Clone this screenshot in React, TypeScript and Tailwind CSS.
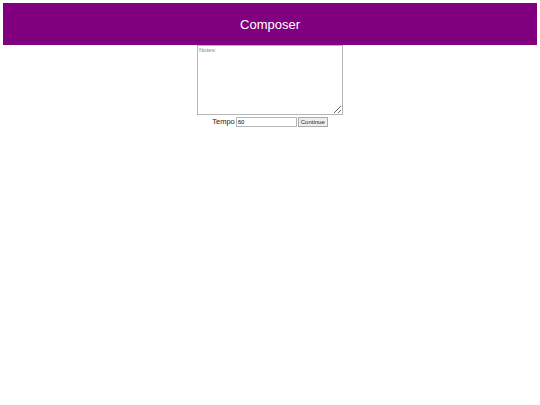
export default function App() {
  return (
    <div className="min-h-[405px] bg-white p-[3px] font-['Liberation_Sans',Arial,sans-serif]">
      {/* Header */}
      <header className="flex h-[42px] items-center justify-center bg-[#800080] pt-[2px]">
        <h1 className="text-[13px] font-normal text-white">Composer</h1>
      </header>

      {/* Form */}
      <div className="flex flex-col items-center">
        <textarea
          placeholder="Notes:"
          className="block h-[70px] w-[146px] resize border border-[#b5b5b5] bg-white px-[1px] py-0 text-[6px] leading-[8px] outline-none placeholder:text-[#8a8a8a]"
        />
        <div className="mt-[2px] flex items-center gap-[1px]">
          <label className="text-[7.5px] font-normal leading-[10px] text-[#222]">Tempo</label>
          <input
            type="text"
            defaultValue="60"
            className="h-[10px] w-[61px] border border-[#b5b5b5] bg-white px-[1px] text-[6px] leading-[8px] text-black outline-none"
          />
          <button className="h-[10px] border border-[#a9a9a9] bg-[#efefef] px-[2px] text-[6px] leading-[8px] text-[#222]">
            Continue
          </button>
        </div>
      </div>
    </div>
  );
}
